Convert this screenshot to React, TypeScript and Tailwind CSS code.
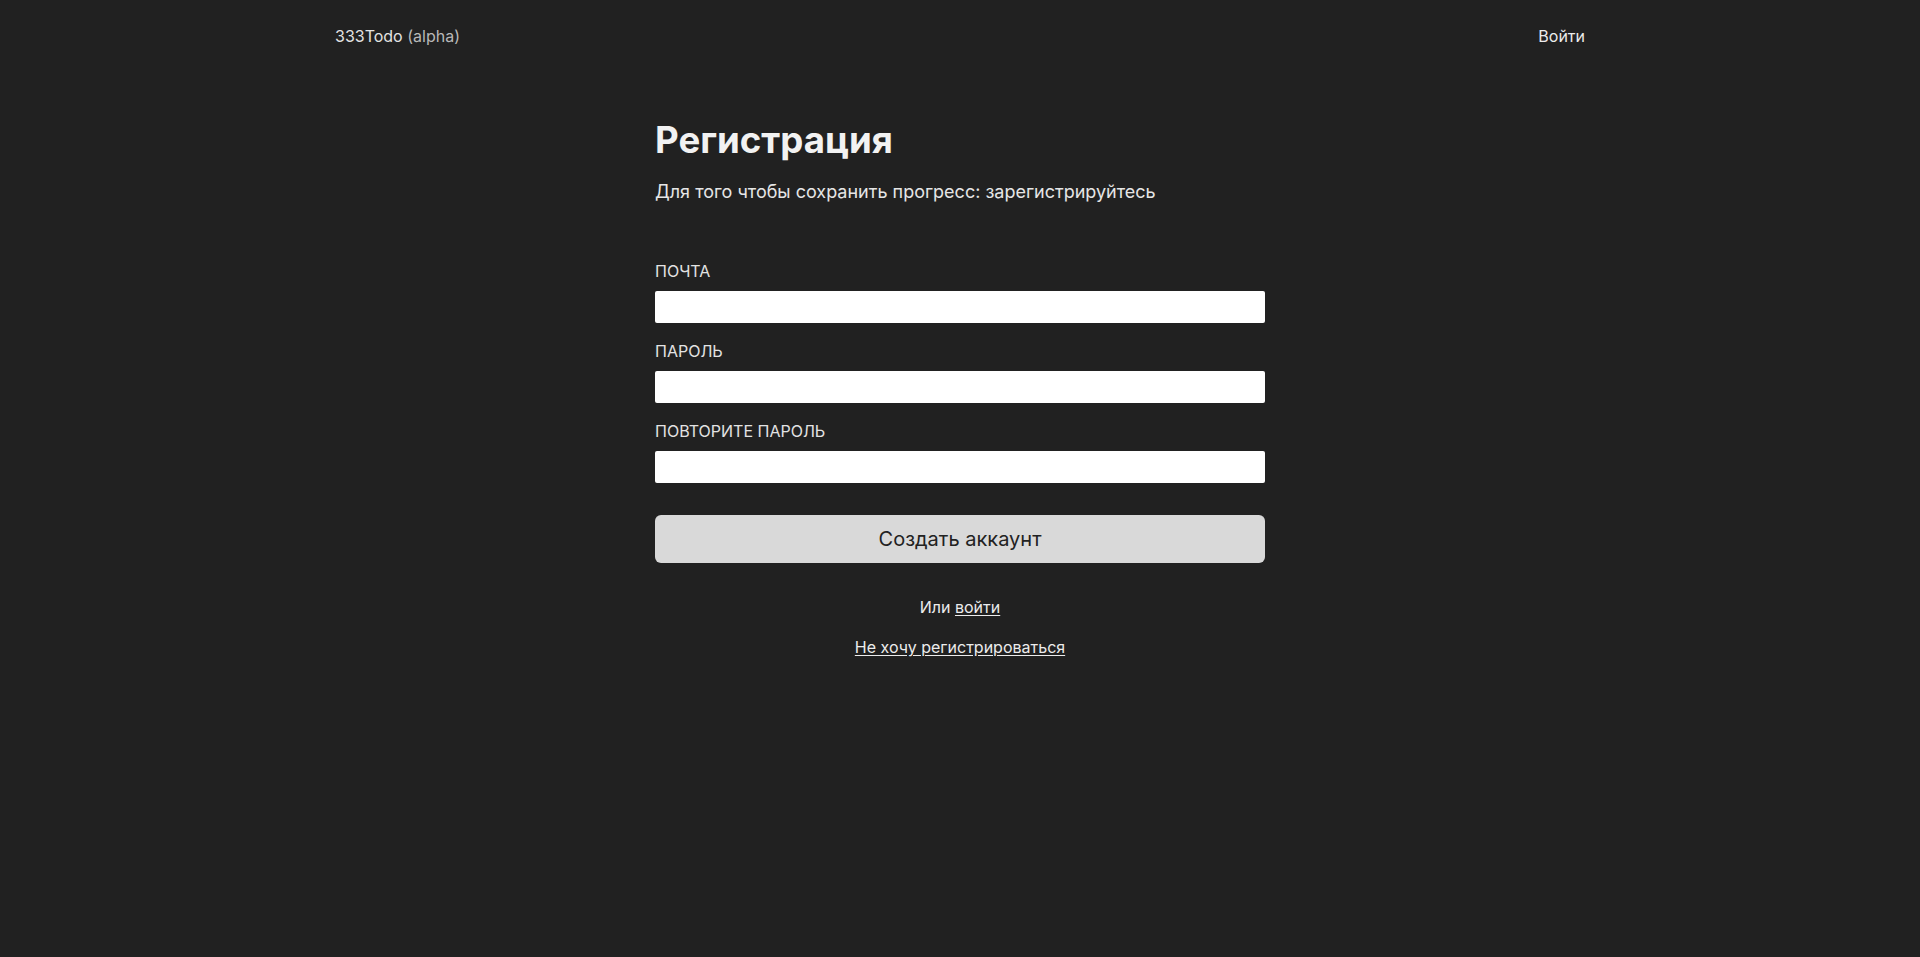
import React, { useState } from "react";

const fields = [
	{ id: "email", label: "ПОЧТА", type: "email" },
	{ id: "password", label: "ПАРОЛЬ", type: "password" },
	{ id: "repeat", label: "ПОВТОРИТЕ ПАРОЛЬ", type: "password" },
];

const App: React.FC = () => {
	const [values, setValues] = useState<Record<string, string>>({});

	return (
		<div
			className="min-h-screen bg-[#212121] text-[#ececec]"
			style={{ fontFamily: "Inter, 'Noto Sans', sans-serif" }}
		>
			<header className="mx-auto flex h-[72px] w-[1250px] items-center justify-between text-base">
				<a href="#" className="text-[#e3e3e3]">
					333Todo <span className="text-[#b8b8b8]">(alpha)</span>
				</a>
				<a href="#" className="text-[#ececec]">Войти</a>
			</header>

			<main className="mx-auto w-[610px] pt-12">
				<h1 className="text-[36.6px] leading-10 font-bold text-[#f2f2f2]">Регистрация</h1>
				<p className="mt-[18px] text-lg text-[#e6e6e6]">
					Для того чтобы сохранить прогресс: зарегистрируйтесь
				</p>

				<form className="mt-[53px] flex flex-col gap-4" onSubmit={(e) => e.preventDefault()}>
					{fields.map((field) => (
						<label key={field.id} className="flex flex-col gap-2">
							<span className="text-base leading-6 text-[#e3e3e3]">{field.label}</span>
							<input
								type={field.type}
								value={values[field.id] ?? ""}
								onChange={(e) => setValues((prev) => ({ ...prev, [field.id]: e.target.value }))}
								className="h-8 w-full rounded-[2px] bg-white px-2 text-base text-[#222] outline-none"
							/>
						</label>
					))}

					<button
						type="submit"
						className="mt-4 h-12 w-full rounded-md bg-[#d9d9d9] text-xl text-[#222222]"
					>
						Создать аккаунт
					</button>
				</form>

				<div className="mt-8 flex flex-col items-center gap-4 text-base leading-6 text-[#ececec]">
					<p>
						Или <a href="#" className="underline underline-offset-2">войти</a>
					</p>
					<a href="#" className="underline underline-offset-2">Не хочу регистрироваться</a>
				</div>
			</main>
		</div>
	);
};

export default App;
